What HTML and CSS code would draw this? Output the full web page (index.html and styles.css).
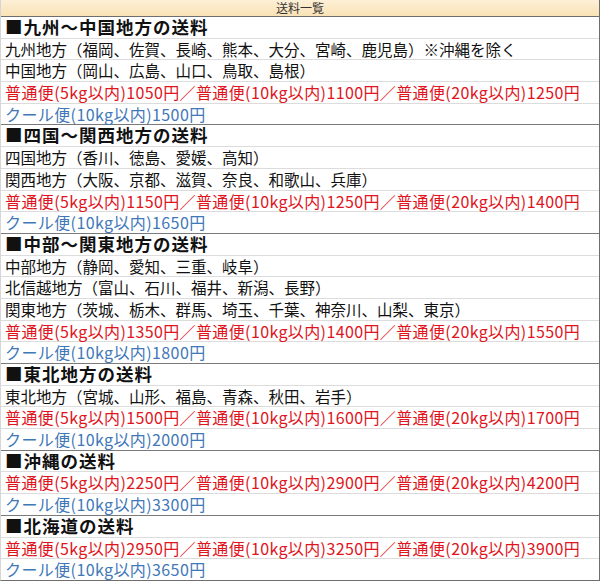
FILE: index.html
```html
<!DOCTYPE html>
<html lang="ja">
<head>
<meta charset="utf-8">
<link rel="stylesheet" href="styles.css">
</head>
<body>
<div class="sheet">
  <div class="head">送料一覧</div>

  <div class="section">
    <div class="row title">■九州～中国地方の送料</div>
    <div class="row">九州地方（福岡、佐賀、長崎、熊本、大分、宮崎、鹿児島）※沖縄を除く</div>
    <div class="row">中国地方（岡山、広島、山口、鳥取、島根）</div>
    <div class="row red">普通便(5kg以内)1050円／普通便(10kg以内)1100円／普通便(20kg以内)1250円</div>
    <div class="row blue">クール便(10kg以内)1500円</div>
  </div>

  <div class="section">
    <div class="row title">■四国～関西地方の送料</div>
    <div class="row">四国地方（香川、徳島、愛媛、高知）</div>
    <div class="row">関西地方（大阪、京都、滋賀、奈良、和歌山、兵庫）</div>
    <div class="row red">普通便(5kg以内)1150円／普通便(10kg以内)1250円／普通便(20kg以内)1400円</div>
    <div class="row blue">クール便(10kg以内)1650円</div>
  </div>

  <div class="section">
    <div class="row title">■中部～関東地方の送料</div>
    <div class="row">中部地方（静岡、愛知、三重、岐阜）</div>
    <div class="row">北信越地方（富山、石川、福井、新潟、長野）</div>
    <div class="row">関東地方（茨城、栃木、群馬、埼玉、千葉、神奈川、山梨、東京）</div>
    <div class="row red">普通便(5kg以内)1350円／普通便(10kg以内)1400円／普通便(20kg以内)1550円</div>
    <div class="row blue">クール便(10kg以内)1800円</div>
  </div>

  <div class="section">
    <div class="row title">■東北地方の送料</div>
    <div class="row">東北地方（宮城、山形、福島、青森、秋田、岩手）</div>
    <div class="row red">普通便(5kg以内)1500円／普通便(10kg以内)1600円／普通便(20kg以内)1700円</div>
    <div class="row blue">クール便(10kg以内)2000円</div>
  </div>

  <div class="section">
    <div class="row title">■沖縄の送料</div>
    <div class="row red">普通便(5kg以内)2250円／普通便(10kg以内)2900円／普通便(20kg以内)4200円</div>
    <div class="row blue">クール便(10kg以内)3300円</div>
  </div>

  <div class="section">
    <div class="row title">■北海道の送料</div>
    <div class="row red">普通便(5kg以内)2950円／普通便(10kg以内)3250円／普通便(20kg以内)3900円</div>
    <div class="row blue">クール便(10kg以内)3650円</div>
  </div>
</div>
</body>
</html>
```

FILE: styles.css
```css
html, body {
  margin: 0;
  padding: 0;
  background: #ffffff;
}

.sheet {
  width: 598px;
  display: flex;
  flex-direction: column;
  border-right: 1px solid #6e6e6e;
  border-left: 1px solid #d6d6d6;
  border-bottom: 1px solid #6e6e6e;
  font-family: "Noto Sans CJK JP", "Noto Sans", sans-serif;
  color: #111111;
}

.head {
  height: 16px;
  line-height: 16px;
  text-align: center;
  font-size: 12px;
  color: #333333;
  background: linear-gradient(#fdf0d6, #f9e2b6);
  border-bottom: 1px solid #6e6e6e;
}

.section {
  display: flex;
  flex-direction: column;
  border-bottom: 1px solid #7a7a7a;
}

.section:last-child {
  border-bottom: none;
}

.row {
  height: 20.7px;
  line-height: 20.7px;
  padding-left: 4px;
  font-size: 15.5px;
  letter-spacing: 0;
  white-space: nowrap;
  border-bottom: 1px solid #dcdcdc;
}

.row:last-child {
  border-bottom: none;
}

.title {
  font-weight: bold;
  font-size: 17.5px;
  letter-spacing: 1px;
}

.red {
  color: #e0141c;
  font-size: 16px;
  letter-spacing: 0.38px;
}

.blue {
  color: #3f78b8;
  font-size: 16px;
  letter-spacing: 0.4px;
}
```
